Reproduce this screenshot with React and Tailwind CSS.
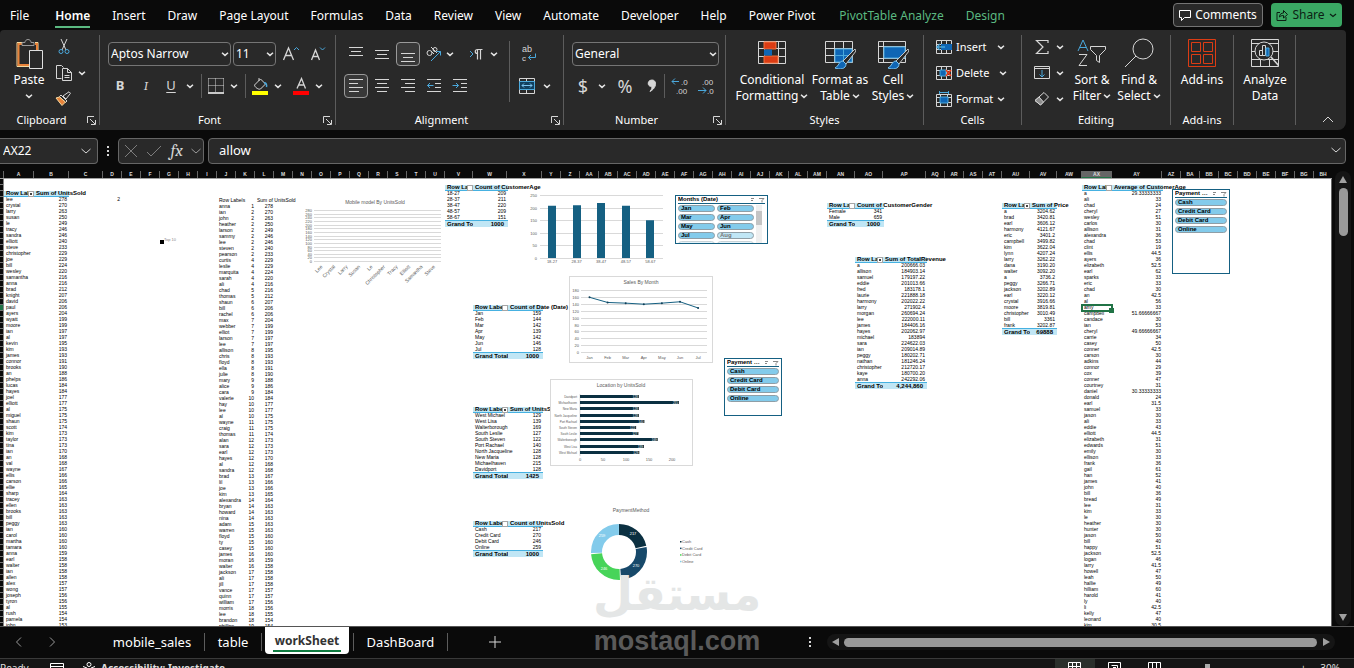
import { useState } from 'react';

const TABS = ['File', 'Home', 'Insert', 'Draw', 'Page Layout', 'Formulas', 'Data', 'Review', 'View', 'Automate', 'Developer', 'Help', 'Power Pivot'];

const W19 = 'w-[19px]';
const COLUMNS = [
  ['A', 'w-[30px]'], ['B', 'w-[35px]'], ['C', 'w-[34px]'],
  ...'DEFGHIJKLMNOPQRSTU'.split('').map((c) => [c, W19]),
  ['V', 'w-[28px]'], ['W', 'w-[34px]'], ['X', 'w-[35px]'], ['Y', W19], ['Z', W19],
  ...'ABCDEFGHIJKLM'.split('').map((c) => ['A' + c, W19]),
  ['AN', 'w-[28px]'], ['AO', 'w-[28px]'], ['AP', 'w-[43px]'],
  ['AQ', W19], ['AR', W19], ['AS', W19], ['AT', W19],
  ['AU', 'w-[28px]'], ['AV', 'w-[27px]'], ['AW', 'w-[25px]'], ['AX', 'w-[30px]'], ['AY', 'w-[50px]'], ['AZ', W19],
  ...'ABCDEFGH'.split('').map((c) => ['B' + c, W19]),
];

const zip = (names, values) => names.split(' ').map((n, i) => [n.replace(/_/g, ' '), values.split(' ')[i]]);

const MODELS =
  'lee crystal larry susan le tracy sandra elliott steve christopher joe bill wesley samantha anna brad knight david paul ayers wyatt moore ian al kevin kim james connor brooks an phelps lucas hayes joel elliott al miguel shaun scott kim taylor tina ian an val wayne ellis carson ellie sharp tracey ellen brooks bill peggy ian carol martha tamara anna earl walter ian allen alex wong joseph tyron al rush pamela john';
const UNITS =
  '278 270 263 250 249 246 246 240 233 229 229 224 220 216 216 212 207 206 206 204 199 199 197 197 195 193 193 191 190 188 186 184 184 177 177 175 175 175 174 173 173 173 170 168 168 167 166 166 165 164 163 163 163 163 163 160 160 160 160 159 158 158 158 158 157 157 156 156 155 154 154 153';
const RANKED =
  'anna ian john heather larson sammy lee steven pearson curtis leslie marquita sarah ali chad thomas shaun bill rachel max webber elliot larson lee allison chris floyd ella julie mary alice cara valerie hay lee al wayne craig thomas alan sara earl hayes al sandra brad lil joe kim alexandra bryan howard nina adam warren floyd ty casey james moran walter jackson ali jill vance quinn william morris lee brandon phillips kay';
const RANKS =
  '1 2 2 2 2 2 2 2 2 4 4 4 4 4 5 5 6 6 6 7 7 7 7 7 8 8 8 8 8 9 9 9 10 10 10 10 11 11 11 12 12 12 12 12 12 13 13 13 13 14 14 14 14 15 15 15 15 15 16 16 16 17 17 17 17 17 17 18 18 18 19 19';
const AGE_NAMES =
  'a ali chad cheryl wesley carlos allison alexandra chad clint ellis ayers elizabeth earl sparks eric chad an al amy campbell candace ian cheryl carrie casey conner carson adkins connor cox conner courtney daniel donald earl samuel jason ali eddie elliott elizabeth edwards emily ellison frank gail han james john bill bread lee kim le heather hunter jason bill happy jackson logan larry howell leah hallie hilliam harold ly li kelly leonard kim';
const AGES =
  '29.33333333 33 24 27 51 30 31 36 53 19 44.5 36 52.5 62 33 33 30 42.5 56 33 51.66666667 30 53 49.66666667 34 50 42.5 30 44 29 39 47 31 30.33333333 24 31.5 33 30 33 43 44.5 31 51 30 33 36 61 52 41 40 36 49 31 33 30 30 30 50 40 51 52.5 46 41.5 47 50 49 60 41 40 42.5 47 40 30.5';

const AGE_GROUPS = zip('18-27 28-37 38-47 48-57 58-67', '209 211 220 209 151');
const MONTHS = zip('Jan Feb Mar Apr May Jun Jul', '159 144 142 139 142 146 128');
const CITIES = [
  ['West Michael', '129'], ['West Lisa', '139'], ['Walterborough', '169'], ['South Leslie', '127'], ['South Steven', '122'],
  ['Port Rachael', '140'], ['North Jacqueline', '128'], ['New Maria', '128'], ['Michaelhaven', '215'], ['Davidport', '128'],
];
const PAYMENTS = [['Cash', '217'], ['Credit Card', '270'], ['Debit Card', '246'], ['Online', '259']];
const GENDERS = [['Female', '341'], ['Male', '659']];
const REVENUE = zip(
  'a allison samuel eddie fred laurie harmony larry morgan lee james hayes michael sara ian peggy nathan christopher kaye anna',
  '200666.03 184903.14 179197.22 201013.66 183178.1 221888.18 202022.22 271902.4 260694.24 222000.11 184406.16 202062.97 183894 224622.03 209014.89 180202.71 181246.24 212720.17 180700.20 242292.06'
);
const PRICE = zip(
  'a brad earl harmony eric campbell kim lynn larry dana walter a peggy jackson earl crystal moore christopher bill frank',
  '3204.62 3420.81 3606.12 4121.67 3401.2 3499.82 3622.04 4207.24 3262.22 3190.20 3092.20 3736.2 3266.71 3202.89 3220.12 3916.66 3819.81 3010.49 3361 3202.87'
);

function Chevron({ className = '' }) {
  return (
    <svg viewBox="0 0 8 8" className={`size-2 shrink-0 ${className}`} fill="none" stroke="#e6e6e6" strokeWidth="1.5">
      <path d="M1 2.8 4 5.4 7 2.8" />
    </svg>
  );
}

function Icon({ size = 16, w, className = '', children }) {
  return (
    <svg viewBox={`0 0 ${w || size} ${size}`} width={w || size} height={size} className={`shrink-0 ${className}`} fill="none" stroke="#d6d6d6" strokeWidth="1">
      {children}
    </svg>
  );
}

function Tool({ label, className = 'w-[26px]', active, children }) {
  return (
    <button
      aria-label={label}
      className={`flex h-6 shrink-0 items-center justify-center rounded ${active ? 'border border-[#9a9a9a] bg-[#383838]' : ''} ${className}`}
    >
      {children}
    </button>
  );
}

function Drop({ label, className = 'w-3' }) {
  return (
    <button aria-label={label} className={`flex h-6 shrink-0 items-center justify-center ${className}`}>
      <Chevron />
    </button>
  );
}

function Group({ title, width, launcher, children }) {
  return (
    <section className={`flex h-[90px] shrink-0 flex-col border-r border-[#5c5c5c] ${width}`}>
      <div className="flex-1">{children}</div>
      <div className={`relative h-[14px] text-center text-[11px] leading-[18px] ${launcher ? 'pr-4' : ''}`}>
        {title}
        {launcher && (
          <button aria-label={`${title} settings`} className="absolute top-[5px] right-[3px]">
            <Icon size={9}>
              <path d="M.5 7V.5H7M3 3l5 5M8.5 4v4.5H4" />
            </Icon>
          </button>
        )}
      </div>
    </section>
  );
}

function Select({ label, value, width }) {
  return (
    <div className={`relative h-6 ${width}`}>
      <select aria-label={label} className="block h-6 w-full appearance-none rounded border border-[#757575] bg-[#292929] pl-[2px] text-[12px] leading-[16px] text-white">
        <option>{value}</option>
      </select>
      <Chevron className="pointer-events-none absolute top-2 right-[2px]" />
    </div>
  );
}

const Divider = ({ className = 'h-6' }) => <div className={`w-px shrink-0 bg-[#5c5c5c] ${className}`} />;

function Lines({ rows }) {
  return (
    <Icon size={16}>
      {rows.map(([x1, x2, y]) => (
        <path key={y} d={`M${x1} ${y}H${x2}`} />
      ))}
    </Icon>
  );
}

function BigButton({ icon, top, bottom, menu = true, width }) {
  return (
    <button className={`flex shrink-0 flex-col items-center text-[12px] leading-4 ${width}`}>
      <span className="mb-[1px] flex h-9 items-center">{icon}</span>
      <span>{top}</span>
      {bottom && (
        <span className="flex items-center gap-[2px]">
          {bottom}
          {menu && <Chevron />}
        </span>
      )}
    </button>
  );
}

const Brush = () => (
  <>
    <path d="M30 8 18 20l3 3L31 10z" fill="#292929" stroke="#c8c8c8" />
    <path d="M18 20c-4 0-4 5-8 7 5 2 11 1 11-4z" fill="#0f66b5" stroke="#7cc4f0" />
  </>
);

function TopBar() {
  const [tab, setTab] = useState('Home');
  return (
    <header className="flex h-[30px] shrink-0 items-center pl-[10px] text-[12px] leading-5">
      <nav className="flex items-center gap-[22px] pt-[3px]">
        {TABS.map((name) => (
          <button
            key={name}
            onClick={() => setTab(name)}
            className={`h-[22px] whitespace-nowrap ${tab === name ? 'border-b-2 border-[#5bb981] font-semibold' : 'border-b-2 border-transparent'} ${name === 'Home' ? 'ml-1' : ''}`}
          >
            {name}
          </button>
        ))}
        <button className="ml-[2px] h-[22px] border-b-2 border-transparent whitespace-nowrap text-[#5bb981]">PivotTable Analyze</button>
        <button className="h-[22px] border-b-2 border-transparent text-[#5bb981]">Design</button>
      </nav>
      <div className="mr-3 ml-auto flex gap-2">
        <button className="flex h-6 w-[90px] items-center justify-center gap-1 rounded border border-[#757575] bg-[#292929]">
          <Icon size={12}>
            <path d="M.5 1.5h11v7h-6l-3 3v-3h-2z" stroke="#fff" />
          </Icon>
          Comments
        </button>
        <button className="flex h-6 w-[71px] items-center justify-center gap-1 rounded bg-[#3aa863] text-[#0c1f14]">
          <Icon size={12}>
            <path d="M4 3.5H1v8h9V8M3.500 8c0-3 2-4 4-4V1.500l4 4-4 3.500V6.500c-2 0-3 .5-4 1.500z" stroke="#0c1f14" />
          </Icon>
          Share
          <svg viewBox="0 0 8 8" className="size-2" fill="none" stroke="#0c1f14" strokeWidth="1.2"><path d="M1 3l3 2.500L7 3" /></svg>
        </button>
      </div>
    </header>
  );
}

function Ribbon() {
  return (
    <div className="mr-2 flex h-[100px] shrink-0 rounded-t rounded-br-lg bg-[#292929] pt-[5px]">
      <Group title="Clipboard" width="w-[100px]" launcher>
        <div className="flex">
          <button className="ml-[14px] flex w-[30px] flex-col items-center text-[12px] leading-4">
            <Icon size={32} w={29} className="mt-[3px]">
              <path d="M8 4.500H2v24h12M20 4.500h3V12" stroke="#f3d9a0" strokeWidth="1" />
              <path d="M7 6H3.500v21H14M20 6h2v6" stroke="#e8833a" strokeWidth="2" />
              <path d="M7 7.500V4.500h3c0-4 6-4 6 0h3v3z" fill="#292929" stroke="#9a9a9a" />
              <path d="M14.500 12.500h13v18h-13z" fill="#292929" stroke="#e0e0e0" />
            </Icon>
            <span className="mt-[2px]">Paste</span>
            <Chevron className="mt-1" />
          </button>
          <div className="ml-[11px] flex flex-col gap-[10px] pt-1">
            <button aria-label="Cut">
              <Icon size={16}>
                <path d="m6 0 5 11M12 0 7 11" />
                <circle cx="6" cy="12.500" r="2" stroke="#4aa8dc" /><circle cx="12" cy="12.500" r="2" stroke="#4aa8dc" />
              </Icon>
            </button>
            <button aria-label="Copy" className="flex items-center gap-[6px]">
              <Icon size={16} w={17}>
                <path d="M6.500 13.500h-5v-13h5l2 2M7.500 3.500h5l4 4v8h-9zM12.500 3.500v4h4M9.500 10.500h5M9.500 12.500h5" />
              </Icon>
              <Chevron />
            </button>
            <button aria-label="Format Painter">
              <Icon size={16}>
                <path d="M8 5 14 .8l1.500 1.500L11 8z" /><path d="m6 4 6 6-1.500 1.500-6-6z" /><path d="M4.500 6 1 7l6 7.500L10.500 11z" fill="#e8833a" stroke="#f3d9a0" />
              </Icon>
            </button>
          </div>
        </div>
      </Group>

      <Group title="Font" width="w-[236px]" launcher>
        <div className="mt-[7px] ml-2 flex items-center">
          <Select label="Font" value="Aptos Narrow" width="w-[123px] mr-[2px]" />
          <Select label="Font size" value="11" width="w-[43px] mr-[2px]" />
          <Tool label="Increase font size" className="w-[26px]">
            <Icon size={18}><path d="m1.500 15 5-12 5 12M3.500 10.500h6" strokeWidth="1.300" /><path d="m12 5 2.500-2.500L17 5" stroke="#4aa8dc" /></Icon>
          </Tool>
          <Tool label="Decrease font size" className="w-[26px]">
            <Icon size={18}><path d="m3.500 15 4-10 4 10M5 11.500h5" strokeWidth="1.300" /><path d="m12 2.500 2.500 2.500L17 2.500" stroke="#4aa8dc" /></Icon>
          </Tool>
        </div>
        <div className="mt-2 ml-2 flex items-center text-[13px]">
          <Tool label="Bold" className="w-6 font-bold text-[#d6d6d6]">B</Tool>
          <Tool label="Italic" className="w-7 font-serif text-[#d6d6d6] italic">I</Tool>
          <Tool label="Underline" className="w-[22px] text-[#d6d6d6] underline underline-offset-2">U</Tool>
          <Drop label="Underline style" className="w-4" />
          <Divider className="mr-1 ml-[3px] h-6" />
          <Tool label="Borders" className="w-5">
            <Icon size={16}><path d="M.5.500h15M.5 7.500h15M.5.500v14M7.500.500v14M15.500.500v14" strokeDasharray="1 1" /><path d="M0 15h16" strokeWidth="1.500" stroke="#fff" /></Icon>
          </Tool>
          <Drop label="Border style" className="w-4" />
          <Divider className="mr-1 ml-[3px] h-6" />
          <Tool label="Fill color" className="w-5">
            <Icon size={18} w={17}>
              <path d="m2.500 8 6-6 5 5-5 5c-2 1-6-2-6-4zM7 1v3" /><path d="M12 6c2-1 3 2 2.500 4" stroke="#4aa8dc" strokeWidth="1.500" />
              <path d="M0 14h16v4H0z" fill="#ff0" stroke="none" />
            </Icon>
          </Tool>
          <Drop label="Fill colors" className="w-4" />
          <Tool label="Font color" className="ml-[5px] w-5">
            <Icon size={18} w={16}>
              <path d="m4 11.500 4.500-10 4 10M5.500 8h5.500" strokeWidth="1.300" /><path d="M0 14h16v4H0z" fill="#f00" stroke="none" />
            </Icon>
          </Tool>
          <Drop label="Font colors" className="w-4" />
        </div>
      </Group>

      <Group title="Alignment" width="w-[228px]" launcher>
        <div className="flex">
          <div className="mt-[7px] ml-2 w-[165px]">
            <div className="flex items-center gap-[2px]">
              <Tool label="Top align" className="w-6"><Lines rows={[[1, 15, 1.5], [3, 13, 5.5], [1, 15, 9.5]]} /></Tool>
              <Tool label="Middle align" className="w-6"><Lines rows={[[1, 15, 4.5], [3, 13, 8.5], [1, 15, 12.5]]} /></Tool>
              <Tool label="Bottom align" className="w-6" active><Lines rows={[[1, 15, 7.5], [3, 13, 11.5], [1, 15, 15.5]]} /></Tool>
              <div className="flex">
                <Tool label="Orientation" className="w-6">
                  <Icon size={16}><circle cx="3.500" cy="7" r="2.500" /><path d="M5 5l3 3M5 1l6 6" /><circle cx="9" cy="3.500" r="2" /><path d="M5 15 14.500 5.500M10.500 5.500h4v4" stroke="#4aa8dc" /></Icon>
                </Tool>
                <Drop label="Orientation options" className="w-2" />
              </div>
              <div className="ml-2 flex">
                <Tool label="Text direction" className="w-6">
                  <Icon size={16}><path d="m2 5 3 3-3 3" stroke="#4aa8dc" /><path d="M14.500 3.500H9.500c-3 0-3 4 0 4v6M12.500 3.500v10M9.500 3.500v4" strokeWidth="1.200" /></Icon>
                </Tool>
                <Drop label="Direction options" />
              </div>
            </div>
            <div className="mt-2 flex items-center gap-[2px]">
              <Tool label="Align left" className="w-6" active><Lines rows={[[1, 15, 1.5], [1, 10, 5.5], [1, 15, 9.5], [1, 11, 13.5]]} /></Tool>
              <Tool label="Center" className="w-6"><Lines rows={[[1, 15, 1.5], [3, 13, 5.5], [1, 15, 9.5], [3, 13, 13.5]]} /></Tool>
              <Tool label="Align right" className="w-6"><Lines rows={[[1, 15, 1.5], [5, 15, 5.5], [1, 15, 9.5], [5, 15, 13.5]]} /></Tool>
              <Tool label="Decrease indent" className="w-6">
                <Icon size={16}><path d="M1 1.500h14M9 5.500h6M9 9.500h6M1 13.500h14" /><path d="M7.500 7.500h-6m2.500-2.500L1.500 7.500 4 10" stroke="#4aa8dc" /></Icon>
              </Tool>
              <Tool label="Increase indent" className="w-6">
                <Icon size={16}><path d="M1 1.500h14M9 5.500h6M9 9.500h6M1 13.500h14" /><path d="M.5 7.500h6M4 5l2.500 2.500L4 10" stroke="#4aa8dc" /></Icon>
              </Tool>
            </div>
          </div>
          <Divider className="mt-[6px] h-[61px]" />
          <div className="mt-[7px] ml-[9px] flex flex-col gap-2">
            <Tool label="Wrap text" className="w-5">
              <svg width="16" height="20" viewBox="0 0 16 20" fill="none" className="[font-family:'Liberation_Sans',sans-serif]">
                <text x="1" y="8" fontSize="9" fill="#d6d6d6">ab</text><text x="1" y="17" fontSize="8" fill="#d6d6d6">c</text>
                <path d="M14.500 9.500v4H7.500M10 11l-2.500 2.500L10 16" stroke="#4aa8dc" />
              </svg>
            </Tool>
            <div className="flex">
              <Tool label="Merge" className="w-4">
                <Icon size={16}><path d="M.5.500h15v15H.5zM7.500.500v3M7.500 12v3" /><path d="M.5 3.500h15v8H.5z" fill="#12405f" stroke="#4aa8dc" /><path d="M3 7.500h10M5 5.500l-2 2 2 2M11 5.500l2 2-2 2" stroke="#7cc4f0" /></Icon>
              </Tool>
              <Drop label="Merge options" className="ml-1 w-4" />
            </div>
          </div>
        </div>
      </Group>

      <Group title="Number" width="w-[162px]" launcher>
        <div className="mt-[7px] ml-2"><Select label="Number format" value="General" width="w-[147px]" /></div>
        <div className="mt-2 ml-2 flex items-center text-[#d6d6d6]">
          <Tool label="Currency" className="w-[22px] text-[18px]">$</Tool>
          <Drop label="Currency options" className="w-4" />
          <Tool label="Percent" className="w-[30px] text-[18px]">%</Tool>
          <Tool label="Comma" className="w-6"><Icon size={14} w={10}><path d="M5 1c5 0 5 8-2 11.500C5 10 5 9 4.500 7.500 0 7.500 0 1 5 1z" fill="#d6d6d6" /></Icon></Tool>
          <Divider />
          <Tool label="Increase decimal" className="ml-[2px] w-[26px]">
            <svg width="18" height="18" viewBox="0 0 18 18" fontSize="8" fill="#d6d6d6" className="[font-family:'Liberation_Sans',sans-serif]"><path d="M8 4.500H1M4 1.500l-3 3 3 3" fill="none" stroke="#4aa8dc" /><text x="10" y="8">.0</text><text x="5" y="17">.00</text></svg>
          </Tool>
          <Tool label="Decrease decimal" className="w-[26px]">
            <svg width="18" height="18" viewBox="0 0 18 18" fontSize="8" fill="#d6d6d6" className="[font-family:'Liberation_Sans',sans-serif]"><path d="M1 13.500h8M6 10.500l3 3-3 3" fill="none" stroke="#4aa8dc" /><text x="5" y="8">.00</text><text x="10" y="17">.0</text></svg>
          </Tool>
        </div>
      </Group>

      <Group title="Styles" width="w-[198px]">
        <div className="ml-2 flex">
          <BigButton
            width="w-[76px]" top="Conditional" bottom="Formatting"
            icon={<Icon size={24} w={29}><path d="M.5.500h27v22H.5zM0 7.500h28M0 15.500h28M6.500 0v23M20.500 0v23" /><path d="M6 1h12v7H6zM6 15h14v7H6z" fill="#dc3c14" stroke="#f0703c" /><path d="M6 8.500h8v6H6z" fill="#0f66b5" stroke="none" /></Icon>}
          />
          <BigButton
            width="w-[60px]" top="Format as" bottom="Table"
            icon={<Icon size={28} w={31} className="mt-1"><path d="M.5.500h27v21H.5zM0 7.500h28M0 14.500h28M9.500 0v22M18.500 0v22" /><path d="M10 8h17v13H10z" fill="#0f66b5" stroke="#4aa8dc" /><path d="M18.500 8v13M10 14.500h17" stroke="#4aa8dc" /><Brush /></Icon>}
          />
          <BigButton
            width="w-[46px]" top="Cell" bottom="Styles"
            icon={<Icon size={28} w={31} className="mt-1"><path d="M.5.500h27v21H.5zM0 5.500h28M5.500 0v22M0 17.500h28" /><path d="M6 6h21v11H6z" fill="#0f66b5" stroke="#4aa8dc" /><Brush /></Icon>}
          />
        </div>
      </Group>

      <Group title="Cells" width="w-[98px]">
        <div className="flex flex-col gap-[2px] pl-3 text-[11px]">
          <button className="flex h-6 items-center gap-1">
            <Icon size={14} w={16}><path d="M.5.500h15v13H.5zM0 4.500h16M0 9.500h16M5.500 0v14M10.500 0v14" /><path d="M5 4h11v6H5z" fill="#0f66b5" stroke="none" /><path d="M9 7H1m3-3L1 7l3 3" stroke="#4aa8dc" strokeWidth="1.300" /></Icon>
            Insert <Chevron className="ml-[6px]" />
          </button>
          <button className="flex h-6 items-center gap-1">
            <Icon size={14} w={16}><path d="M.5.500h15v13H.5zM0 4.500h16M0 9.500h16M5.500 0v14M10.500 0v14" /><path d="M4 4h6v6H4z" fill="#0f66b5" stroke="#4aa8dc" /><path d="m10 4 5 6M15 4l-5 6" stroke="#e8401c" strokeWidth="1.600" /></Icon>
            Delete <Chevron className="ml-[6px]" />
          </button>
          <button className="flex h-6 items-center gap-1">
            <Icon size={16}><path d="M.5 3.500h15v12H.5zM0 6.500h16M0 11.500h16M4.500 3v13M11.500 3v13" /><path d="M4 6h8v6H4z" fill="#0f66b5" stroke="#4aa8dc" /><path d="M3.500 1.500h9M3.500 0v3M12.500 0v3" stroke="#4aa8dc" /></Icon>
            Format <Chevron />
          </button>
        </div>
      </Group>

      <Group title="Editing" width="w-[149px]">
        <div className="flex">
          <div className="flex w-[46px] shrink-0 flex-col gap-[2px] pl-3">
            <button aria-label="AutoSum" className="flex h-6 items-center gap-[6px]">
              <Icon size={16}><path d="M14 4V1.500H2.500L9 8l-6.500 6.500H14V12" strokeWidth="1.200" /></Icon><Chevron />
            </button>
            <button aria-label="Fill" className="flex h-6 items-center gap-[6px]">
              <Icon size={16}><path d="M.5 1.500h15v12H.5zM.5 3.500h15" /><path d="M8 5v7M5.500 9.500 8 12l2.500-2.500" stroke="#4aa8dc" /></Icon><Chevron />
            </button>
            <button aria-label="Clear" className="flex h-6 items-center gap-[6px]">
              <Icon size={16}><path d="M10 1.500 14.500 6l-8 8L1 9.500z" /><path d="m5 6 4.500 5-3 3L1 9.500z" fill="#8c8c8c" /></Icon><Chevron />
            </button>
          </div>
          <BigButton
            width="w-[48px]" top="Sort &" bottom="Filter"
            icon={<svg width="30" height="28" viewBox="0 0 30 28" fill="none"><path d="m1 12 5-11 5 11M3 8.500h6" stroke="#4aa8dc" /><path d="M2 15.500h8L2 26.500h8M13.500 7.500h15v3l-6 6v7l-3-2v-5l-6-6z" stroke="#d6d6d6" /></svg>}
          />
          <BigButton
            width="w-[46px]" top="Find &" bottom="Select"
            icon={<Icon size={30}><circle cx="19" cy="11" r="10" /><path d="M12 18 1 29" /></Icon>}
          />
        </div>
      </Group>

      <Group title="Add-ins" width="w-[63px]">
        <BigButton
          width="w-[62px]" top="Add-ins"
          icon={<Icon size={28}><path d="M.5.500h27v27H.5zM3.500 3.500h9v9h-9zM15.500 3.500h9v9h-9zM3.500 15.500h9v9h-9zM15.500 15.500h9v9h-9z" stroke="#dc3c14" /></Icon>}
        />
      </Group>

      <Group title="" width="w-[62px]">
        <BigButton
          width="w-[62px]" top="Analyze" bottom="Data" menu={false}
          icon={<Icon size={28}><path d="M.5.500h27v27H.5zM0 4.500h28M0 12.500h28M0 20.500h28M9.500 20v8M18.500 20v8" /><circle cx="13" cy="12" r="9" fill="#292929" /><path d="M8.500 11.500h3v5h-3zM11.500 6.500h3v10h-3z" /><path d="M15 9h3v8h-3z" fill="#0f66b5" stroke="#4aa8dc" /><path d="m20 18 8 9" strokeWidth="1.500" /></Icon>}
        />
      </Group>
      <button aria-label="Collapse ribbon" className="mr-3 mb-[6px] ml-auto self-end">
        <Icon size={10} w={12}><path d="m1 8 5-5 5 5" /></Icon>
      </button>
    </div>
  );
}

function FormulaBar() {
  return (
    <div className="mt-2 mr-2 mb-[7px] flex h-[26px] shrink-0 text-[13px]">
      <div className="flex w-[98px] items-center rounded-r border border-l-0 border-[#666] bg-[#292929] pr-[6px] pl-[3px]">
        <input aria-label="Name box" defaultValue="AX22" className="w-full min-w-0 bg-transparent text-[12px] outline-none" />
        <Icon size={10}><path d="m.5 3 4.500 4 4.500-4" /></Icon>
      </div>
      <div className="flex w-5 items-center justify-center">
        <Icon size={12} w={2}><path d="M0 2h2M0 6h2M0 10h2" strokeWidth="2" /></Icon>
      </div>
      <div className="flex w-[86px] items-center justify-between rounded border border-[#666] bg-[#292929] pr-[2px] pl-[5px]">
        <button aria-label="Cancel"><Icon size={14}><path d="m1 1 12 12M13 1 1 13" stroke="#7d7d7d" /></Icon></button>
        <button aria-label="Enter"><Icon size={14} w={16}><path d="m1 8 4 4L15 2" stroke="#7d7d7d" /></Icon></button>
        <button aria-label="Insert function" className="font-serif text-[17px] leading-5 text-[#d6d6d6] italic">fx</button>
        <Icon size={10}><path d="m.5 3 4.500 4 4.500-4" stroke="#9a9a9a" /></Icon>
      </div>
      <div className="ml-1 flex flex-1 items-center rounded border border-[#666] bg-[#292929] pr-1 pl-[10px]">
        <input aria-label="Formula" defaultValue="allow" className="flex-1 bg-transparent outline-none" />
        <Icon size={10}><path d="m.5 2 4.500 4 4.500-4" /></Icon>
      </div>
    </div>
  );
}

function Pivot({ cols, head, rows, total, sorted, className = '' }) {
  return (
    <table className={`table-fixed border-separate border-spacing-0 ${className}`}>
      <colgroup>
        {cols.map((c, i) => <col key={i} className={c} />)}
      </colgroup>
      <thead>
        <tr className="text-left text-[6px] leading-[5px]">
          <th className="h-[6px] border-b border-[#46b1e1] bg-[#c0e6f5] p-0 whitespace-nowrap">
            <div className="flex justify-between">
              <span className="w-0 grow overflow-hidden pl-[2px]">{head[0]}</span>
              <button aria-label="Filter" className="mb-[-1px] flex size-[6px] items-center justify-center border border-[#a6a6a6] bg-white">
                {sorted && <span className="size-[2px] bg-[#444]" />}
              </button>
            </div>
          </th>
          <th className="h-[6px] border-b border-[#46b1e1] bg-[#c0e6f5] p-0 whitespace-nowrap">
            <div className="w-0 pl-[2px]">{head[1]}</div>
          </th>
        </tr>
      </thead>
      <tbody>
        {rows.map(([name, value], i) => {
          const line = total && i === rows.length - 1 ? 'border-b border-[#46b1e1]' : 'border-b border-transparent';
          return (
            <tr key={i} className="leading-[5px]">
              <td className={`h-[6px] p-0 pl-[2px] whitespace-nowrap ${line}`}>{name}</td>
              <td className={`h-[6px] p-0 pr-[2px] text-right whitespace-nowrap ${line}`}>{value}</td>
            </tr>
          );
        })}
      </tbody>
      {total && (
        <tfoot>
          <tr className="bg-[#c0e6f5] text-[6px] leading-[6px] font-bold">
            <td className="h-[6px] overflow-hidden p-0 pl-[2px] whitespace-nowrap">Grand Total</td>
            <td className="h-[6px] p-0 pr-1 text-right">{total}</td>
          </tr>
        </tfoot>
      )}
    </table>
  );
}

function Slicer({ title, items, wide, className }) {
  return (
    <div className={`absolute border border-[#156082] bg-white px-[2px] font-bold ${className}`}>
      <div className="flex h-[8px] items-center border-b border-[#156082] text-[6px] leading-[7px]">
        <span className="flex-1 truncate">{title}</span>
        <svg width="15" height="6" viewBox="0 0 15 6" fill="none" stroke="#888" strokeWidth="1"><path d="M1 1.500h3M1 3.500h2M9 1.500h5l-2 2v2" /></svg>
      </div>
      <div className="flex pt-px">
        <div className={`grid flex-1 gap-[2px] text-[6px] ${wide ? 'grid-cols-2' : 'grid-cols-1'}`}>
          {items.map((item) => (
            <button
              key={item}
              className={`h-[7px] rounded-full border border-[#8f9ea6] pl-[2px] text-left leading-[5px] ${item === 'Aug' ? 'bg-[#c0e6f5] text-[#777]' : 'bg-[#83cbeb]'}`}
            >
              {item}
            </button>
          ))}
          {wide && (
            <>
              <div className="h-[7px] rounded-full border border-[#c9d2d6] bg-[#e3f3fa]" />
              <div className="h-[7px] rounded-full border border-[#c9d2d6] bg-[#e3f3fa]" />
            </>
          )}
        </div>
        {wide && <div className="mr-[3px] ml-[2px] w-[6px] bg-[#efefef] pt-[6px]"><div className="h-[14px] bg-[#c4c4c4]" /></div>}
      </div>
    </div>
  );
}

function ModelChart() {
  const names = ['Lee', 'Crystal', 'Larry', 'Susan', 'Le', 'Christopher', 'Tracy', 'Elliott', 'Samantha', 'Steve'];
  return (
    <svg className="absolute top-4 left-[296px]" width="146" height="94" fontSize="5" fill="#595959">
      <text x="75" y="9" textAnchor="middle">Mobile model By UnitsSold</text>
      {Array.from({ length: 15 }, (_, i) => {
        const y = Math.round(15 + i * 3.65) + 0.5;
        return (
          <g key={i}>
            <path d={`M14 ${y}h127`} stroke="#d9d9d9" />
            <text x="12" y={y + 1.5} fontSize="4" textAnchor="end">{280 - i * 20}</text>
          </g>
        );
      })}
      {names.map((n, i) => (
        <text key={n} textAnchor="end" transform={`translate(${23 + i * 12.5} 72) rotate(-45)`}>{n}</text>
      ))}
    </svg>
  );
}

function AgeChart() {
  return (
    <svg className="absolute top-[12px] left-[521px]" width="142" height="74" fontSize="4" fill="#595959">
      {[250, 200, 150, 100, 50, 0].map((v, i) => {
        const y = Math.round(4 + i * 12.6) + 0.5;
        return (
          <g key={v}>
            <path d={`M15 ${y}h123`} stroke="#d9d9d9" />
            <text x="12" y={y + 1.5} textAnchor="end">{v}</text>
          </g>
        );
      })}
      {AGE_GROUPS.map(([name, v], i) => (
        <g key={name}>
          <rect x={23 + Math.round(i * 24.6)} y={67 - v / 4} width="8" height={v / 4} fill="#156082" />
          <text x={27 + i * 24.6} y="72" textAnchor="middle">{name}</text>
        </g>
      ))}
    </svg>
  );
}

function MonthChart() {
  const points = MONTHS.map(([, v], i) => [19.5 + i * 18.1, 75 - v * 0.344]);
  return (
    <svg className="absolute top-[97px] left-[565px] border border-[#d9d9d9] bg-white" width="144" height="87" fontSize="4" fill="#595959">
      <text x="71" y="7" fontSize="5" textAnchor="middle">Sales By Month</text>
      {Array.from({ length: 10 }, (_, i) => {
        const y = Math.round(13 + i * 6.9) + 0.5;
        return (
          <g key={i}>
            <path d={`M11 ${y}h126`} stroke="#d9d9d9" />
            <text x="9" y={y + 1.5} textAnchor="end">{180 - i * 20}</text>
          </g>
        );
      })}
      <polyline points={points.join(' ')} fill="none" stroke="#156082" />
      {points.map(([x, y], i) => (
        <g key={i}>
          <circle cx={x} cy={y} r="1" fill="#0f3f58" />
          <text x={x} y="82" textAnchor="middle">{MONTHS[i][0]}</text>
        </g>
      ))}
    </svg>
  );
}

function LocationChart() {
  return (
    <svg className="absolute top-[200px] left-[546px] border border-[#d9d9d9] bg-white" width="143" height="87" fontSize="4" fill="#595959">
      <text x="70" y="7" fontSize="5" textAnchor="middle">Location by UnitsSold</text>
      <path d="M29 14v62" stroke="#d9d9d9" />
      {[...CITIES].reverse().map(([name, v], i) => (
        <g key={name}>
          <rect x="29" y={15 + Math.round(i * 6.2)} width={v * 0.46} height="3" fill="#0b3041" />
          <text x="26" y={18 + i * 6.2} fontSize="3" textAnchor="end">{name}</text>
          <text x={28 + v * 0.46} y={18 + i * 6.2} fontSize="3" textAnchor="end" fill="#fff">{v}</text>
        </g>
      ))}
      {[0, 50, 100, 150, 200].map((v) => (
        <text key={v} x={29 + v * 0.46} y="81" textAnchor="middle">{v}</text>
      ))}
    </svg>
  );
}

function PaymentChart() {
  const colors = ['#0b3041', '#17496a', '#47d459', '#83cbeb'];
  const r = 22.5;
  const around = 2 * Math.PI * r;
  const spots = [[46, 31], [49, 63], [17, 66], [15, 33]];
  const sum = PAYMENTS.reduce((s, p) => s + Number(p[1]), 0);
  let start = 0;
  return (
    <svg className="absolute top-[325px] left-[583px]" width="116" height="80" fontSize="4" fill="#595959">
      <text x="44" y="8" fontSize="5" textAnchor="middle">PaymentMethod</text>
      {PAYMENTS.map(([name, v], i) => {
        const part = (v / sum) * around;
        const offset = start;
        start += part;
        return (
          <g key={name}>
            <circle cx="32" cy="48" r={r} fill="none" stroke={colors[i]} strokeWidth="11" strokeDasharray={`${part - 1} ${around}`} strokeDashoffset={-offset} transform="rotate(-90 32 48)" />
            <text x={spots[i][0]} y={spots[i][1]} fill="#fff" textAnchor="middle">{v}</text>
            <rect x="93" y={37 + i * 6.6} width="1.500" height="1.500" fill={colors[i]} />
            <text x="95" y={39 + i * 6.6}>{name}</text>
          </g>
        );
      })}
    </svg>
  );
}

function Sheet() {
  const ranked = RANKED.split(' ');
  const ranks = RANKS.split(' ');
  const units = UNITS.split(' ');
  return (
    <main className="relative flex min-w-0 flex-1 items-start overflow-hidden border-r border-[#666] bg-white text-[5px] leading-[5px] text-black [font-family:'Liberation_Sans',sans-serif]">
      <div className="shrink-0 pt-3">
        <Pivot className="w-[65px]" cols={['w-[30px]', 'w-[35px]']} head={['Row Labels', 'Sum of UnitsSold']} rows={zip(MODELS, UNITS)} sorted />
      </div>
      <div className="ml-[34px] w-[19px] shrink-0 pt-[18px] pr-[2px] text-right">2</div>
      <table className="mt-[18px] ml-[95px] w-[57px] shrink-0 table-fixed border-separate border-spacing-0">
        <thead>
          <tr className="text-left">
            <th className="h-[6px] p-0 pl-[2px] font-medium whitespace-nowrap" colSpan={2}>Row Labels</th>
            <th className="h-[6px] p-0 pl-[2px] font-medium whitespace-nowrap">Sum of UnitsSold</th>
          </tr>
        </thead>
        <tbody>
          {ranked.map((name, i) => (
            <tr key={i}>
              <td className="h-[6px] p-0 pl-[2px]">{name}</td>
              <td className="h-[6px] p-0 pr-[1px] text-right">{ranks[i]}</td>
              <td className="h-[6px] p-0 pr-[1px] text-right">{units[i]}</td>
            </tr>
          ))}
        </tbody>
      </table>
      <div className="ml-[171px] flex w-[98px] shrink-0 flex-col pt-[6px]">
        <Pivot className="w-[63px]" cols={['w-[28px]', 'w-[35px]']} head={['Row Labels', 'Count of CustomerAge']} rows={AGE_GROUPS} total="1000" />
        <div className="mt-[78px] ml-7 flex w-[70px] flex-col">
          <Pivot className="w-[70px]" cols={['w-[35px]', 'w-[35px]']} head={['Row Labels', 'Count of Date (Date)']} rows={MONTHS} total="1000" />
          <Pivot className="mt-12 w-[70px]" cols={['w-[35px]', 'w-[35px]']} head={['Row Labels', 'Sum of UnitsSold']} rows={CITIES} total="1425" sorted />
          <Pivot className="mt-[42px] w-[70px]" cols={['w-[35px]', 'w-[35px]']} head={['Row Labels', 'Count of UnitsSold']} rows={PAYMENTS} total="1000" />
        </div>
      </div>
      <div className="ml-[284px] flex w-[100px] shrink-0 flex-col pt-6">
        <Pivot className="w-[57px]" cols={['w-[28px]', 'w-[29px]']} head={['Row Labels', 'Count of CustomerGender']} rows={GENDERS} total="1000" />
        <Pivot className="mt-[30px] ml-7 w-[72px]" cols={['w-[28px]', 'w-[44px]']} head={['Row Labels', 'Sum of TotalRevenue']} rows={REVENUE} total="4,244,860" sorted />
      </div>
      <div className="ml-[75px] shrink-0 pt-6">
        <Pivot className="w-[55px]" cols={['w-[28px]', 'w-[27px]']} head={['Row Labels', 'Sum of Price']} rows={PRICE} total="69888" sorted />
      </div>
      <div className="ml-[25px] shrink-0 pt-[6px]">
        <Pivot className="w-[81px]" cols={['w-[30px]', 'w-[51px]']} head={['Row Labels', 'Average of CustomerAge']} rows={zip(AGE_NAMES, AGES)} />
      </div>

      {/* Objects floating over the cells */}
      <div className="absolute top-[57px] left-[156px] flex items-center text-[4px] leading-[4px] text-[#888]"><span className="mt-1 size-1 bg-black" />Top 10</div>
      <div className="absolute top-[125px] left-[1077px] h-[8px] w-8 border-2 border-[#217346]">
        <span className="absolute -right-[3px] -bottom-[3px] size-[5px] bg-[#217346]" />
      </div>
      <ModelChart />
      <AgeChart />
      <MonthChart />
      <LocationChart />
      <PaymentChart />
      <Slicer className="top-4 left-[671px] h-[49px] w-[93px] overflow-hidden" title="Months (Date)" wide items={['Jan', 'Feb', 'Mar', 'Apr', 'May', 'Jun', 'Jul', 'Aug']} />
      <Slicer className="top-[179px] left-[720px] h-[58px] w-[58px]" title="Payment Method" items={['Cash', 'Credit Card', 'Debit Card', 'Online']} />
      <Slicer className="top-[10px] left-[1168px] h-[85px] w-[58px]" title="Payment Method" items={['Cash', 'Credit Card', 'Debit Card', 'Online']} />
    </main>
  );
}

function Grid() {
  return (
    <div className="flex min-w-0 flex-1 flex-col">
      <div className="flex h-[8px] shrink-0 overflow-hidden border-b border-[#a0a0a0] pl-[3px] text-[5px] leading-[7px] font-bold text-[#ddd] [font-family:'Liberation_Sans',sans-serif]">
        {COLUMNS.map(([name, width]) => (
          <div key={name} className={`shrink-0 border-l border-[#666] text-center ${width} ${name === 'AX' ? 'border-b border-b-[#217346] bg-[#666]' : ''}`}>{name}</div>
        ))}
      </div>
      <div className="flex min-h-0 flex-1">
        <div className="w-1 shrink-0 overflow-hidden border-r border-[#888]">
          {Array.from({ length: 75 }, (_, i) => (
            <div key={i} className={`h-[6px] border-b border-[#777] ${i === 21 ? 'bg-[#217346]' : ''}`} />
          ))}
        </div>
        <Sheet />
      </div>
    </div>
  );
}

function Arrow({ d, className = '' }) {
  return <svg width="10" height="10" viewBox="0 0 10 10" className={`shrink-0 ${className}`} fill="#a0a0a0"><path d={d} /></svg>;
}

function SheetTabs() {
  return (
    <footer className="flex h-8 shrink-0 items-start border-t border-[#555] text-[13px] leading-[30px]">
      <button aria-label="Previous sheet" className="ml-[14px] flex h-[30px] w-[10px] items-center"><Icon size={10}><path d="M7 .5 2.500 5 7 9.500" stroke="#999" /></Icon></button>
      <button aria-label="Next sheet" className="ml-[23px] flex h-[30px] w-[10px] items-center"><Icon size={10}><path d="M3 .5 7.500 5 3 9.500" stroke="#999" /></Icon></button>
      <button className="mr-[6px] ml-[49px] w-[92px] text-center">mobile_sales</button>
      <Divider className="mt-[6px] h-[18px]" />
      <button className="w-14 text-center">table</button>
      <Divider className="mt-[6px] h-[18px]" />
      <button className="ml-[3px] h-[27px] w-[84px] rounded-b bg-white px-2 text-[#333]">
        <span className="block h-[23px] border-b-2 border-[#107c41] text-[12px] leading-6 font-bold">workSheet</span>
      </button>
      <Divider className="mt-[6px] ml-1 h-[18px]" />
      <button className="w-[93px] text-center">DashBoard</button>
      <Divider className="mt-[6px] h-[18px]" />
      <button aria-label="New sheet" className="ml-[41px] flex h-[30px] items-center"><Icon size={12}><path d="M6 0v12M0 6h12" /></Icon></button>
      <div className="mr-[19px] ml-auto flex h-[30px] w-[526px] items-center">
        <Icon size={12} w={2}><path d="M0 2h2M0 6h2M0 10h2" strokeWidth="2" /></Icon>
        <div className="ml-4 flex h-4 flex-1 items-center gap-1 rounded-full bg-[#151515] px-1">
          <Arrow d="M8 1v8L1 5z" className="mr-[-1px]" />
          <div className="h-[9px] flex-1 rounded-full bg-[#9a9a9a]" />
          <Arrow d="M2 1v8l7-4z" />
        </div>
      </div>
    </footer>
  );
}

function StatusBar() {
  return (
    <div className="flex h-[10px] shrink-0 items-start overflow-hidden border-t border-[#3a3a3a] bg-[#151515] text-[10px] leading-[18px] text-[#ddd]">
      <span className="w-[50px]">Ready</span>
      <Icon size={14} className="mt-1"><path d="M.5.500h13v11H.5zM0 3.500h14M3 6.500h3M8 6.500h3" stroke="#fff" /></Icon>
      <Icon size={14} className="mt-[3px] mr-[5px] ml-[18px]"><circle cx="7" cy="2.500" r="2" stroke="#fff" /><path d="M1 4.500 5 6v3l-2 4M13 4.500 9 6v3l2 4" stroke="#fff" /></Icon>
      <span className="font-bold">Accessibility: Investigate</span>
      <div className="mr-[14px] ml-auto flex items-start">
        <span className="flex h-[10px] w-10 justify-center bg-[#2a2f2b] pt-[3px]"><Icon size={13}><path d="M.5.500h12v12H.5zM.5 4.500h12M4.500.500v12M8.500.500v12" stroke="#fff" /></Icon></span>
        <span className="flex w-10 justify-center pt-[3px]"><Icon size={13}><path d="M.5.500h12v12H.5zM3.500 3.500h6v9h-6M5 5.500h3" stroke="#fff" /></Icon></span>
        <span className="flex w-10 justify-center pt-[3px]"><Icon size={13}><path d="M.5.500h12v12H.5zM4.500.500v12M8.500.500v12" stroke="#fff" /></Icon></span>
        <span className="mt-[5px] ml-[30px] h-4 w-[5px] bg-[#aaa]" />
        <span className="mr-[14px] ml-[91px]">+</span>
        <span>30%</span>
      </div>
    </div>
  );
}

function Watermark() {
  return (
    <div className="pointer-events-none absolute bottom-2 left-[595px] flex w-[164px] flex-col items-center whitespace-nowrap" aria-hidden="true">
      <span className="text-[46px] leading-[56px] font-bold text-[#e4e6e6] [font-family:'DejaVu_Sans',sans-serif]" dir="rtl" lang="ar">مستقل</span>
      <span className="text-[27px] leading-[38px] font-bold text-[#5a5a5a] [font-family:'Liberation_Sans',sans-serif]">mostaql.com</span>
    </div>
  );
}

const App = () => (
  <div className="relative flex h-screen flex-col overflow-hidden bg-[#0a0a0a] text-white [font-family:'Noto_Sans',sans-serif]">
    <TopBar />
    <Ribbon />
    <FormulaBar />
    <div className="flex min-h-0 flex-1">
      <Grid />
      <div className="flex w-[22px] shrink-0 flex-col items-center">
        <div className="flex w-4 flex-1 flex-col items-center rounded-full bg-[#151515] py-1">
          <Arrow d="M1 8h8L5 1z" />
          <div className="mt-[3px] h-12 w-[9px] rounded-full bg-[#9a9a9a]" />
          <Arrow d="M1 2h8L5 9z" className="mt-auto" />
        </div>
      </div>
    </div>
    <SheetTabs />
    <StatusBar />
    <Watermark />
  </div>
);

export default App;
